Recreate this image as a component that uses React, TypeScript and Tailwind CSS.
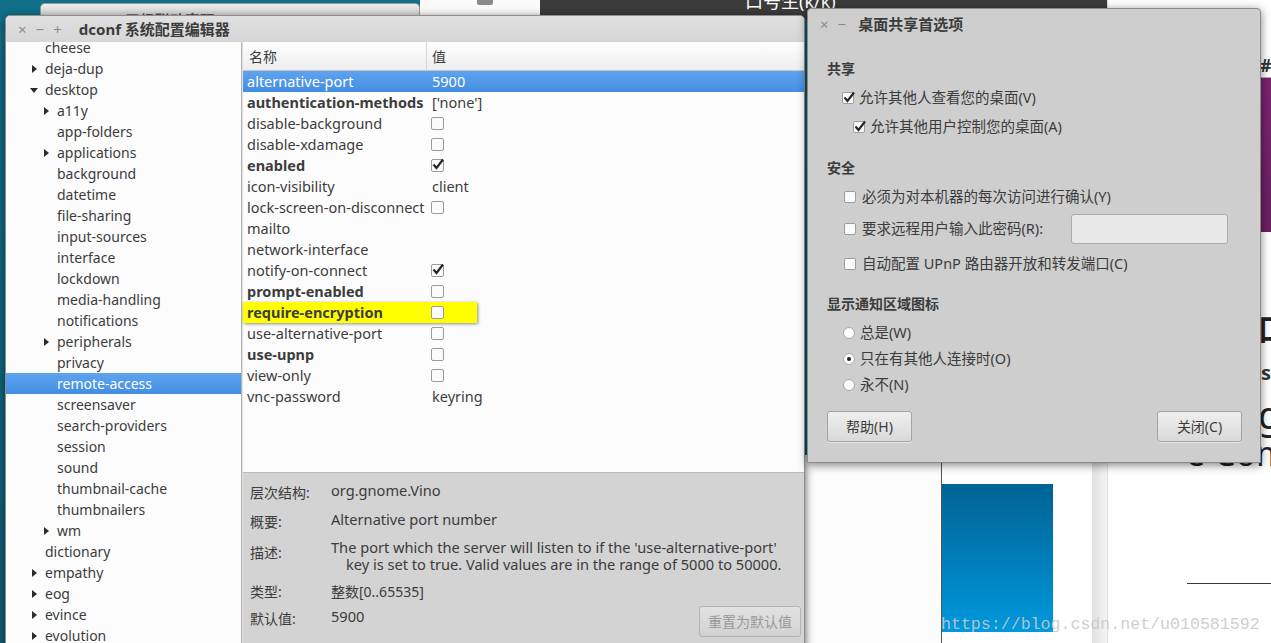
import React from 'react';

type TreeRow = { label: string; level: number; arrow?: 'right' | 'down'; selected?: boolean };

const tree: TreeRow[] = [
  { label: 'cheese', level: 0 },
  { label: 'deja-dup', level: 0, arrow: 'right' },
  { label: 'desktop', level: 0, arrow: 'down' },
  { label: 'a11y', level: 1, arrow: 'right' },
  { label: 'app-folders', level: 1 },
  { label: 'applications', level: 1, arrow: 'right' },
  { label: 'background', level: 1 },
  { label: 'datetime', level: 1 },
  { label: 'file-sharing', level: 1 },
  { label: 'input-sources', level: 1 },
  { label: 'interface', level: 1 },
  { label: 'lockdown', level: 1 },
  { label: 'media-handling', level: 1 },
  { label: 'notifications', level: 1 },
  { label: 'peripherals', level: 1, arrow: 'right' },
  { label: 'privacy', level: 1 },
  { label: 'remote-access', level: 1, selected: true },
  { label: 'screensaver', level: 1 },
  { label: 'search-providers', level: 1 },
  { label: 'session', level: 1 },
  { label: 'sound', level: 1 },
  { label: 'thumbnail-cache', level: 1 },
  { label: 'thumbnailers', level: 1 },
  { label: 'wm', level: 1, arrow: 'right' },
  { label: 'dictionary', level: 0 },
  { label: 'empathy', level: 0, arrow: 'right' },
  { label: 'eog', level: 0, arrow: 'right' },
  { label: 'evince', level: 0, arrow: 'right' },
  { label: 'evolution', level: 0, arrow: 'right' },
];

type KeyRow = { name: string; bold?: boolean; value?: string; check?: boolean; checked?: boolean; selected?: boolean; mark?: boolean };

const keys: KeyRow[] = [
  { name: 'alternative-port', value: '5900', selected: true },
  { name: 'authentication-methods', bold: true, value: "['none']" },
  { name: 'disable-background', check: true },
  { name: 'disable-xdamage', check: true },
  { name: 'enabled', bold: true, check: true, checked: true },
  { name: 'icon-visibility', value: 'client' },
  { name: 'lock-screen-on-disconnect', check: true },
  { name: 'mailto' },
  { name: 'network-interface' },
  { name: 'notify-on-connect', check: true, checked: true },
  { name: 'prompt-enabled', bold: true, check: true },
  { name: 'require-encryption', bold: true, check: true, mark: true },
  { name: 'use-alternative-port', check: true },
  { name: 'use-upnp', bold: true, check: true },
  { name: 'view-only', check: true },
  { name: 'vnc-password', value: 'keyring' },
];

const Arrow = ({ dir, light }: { dir: 'right' | 'down'; light?: boolean }) => (
  <svg width="10" height="10" viewBox="0 0 10 10" className="shrink-0">
    {dir === 'right' ? (
      <path d="M3 1 L8 5 L3 9 Z" fill={light ? '#fff' : '#2b2b2b'} />
    ) : (
      <path d="M1 3 L9 3 L5 8 Z" fill={light ? '#fff' : '#2b2b2b'} />
    )}
  </svg>
);

const CheckBox = ({ checked, size = 13 }: { checked?: boolean; size?: number }) => (
  <span
    className="relative inline-block shrink-0 rounded-[2px] border border-[#9c9c9c] bg-[#fbfbfb]"
    style={{ width: size, height: size }}
  >
    {checked && (
      <svg width="14" height="14" viewBox="0 0 14 14" className="absolute left-[-1px] top-[-3px]">
        <path d="M2.5 7.5 L5.5 11 L12 2.5" fill="none" stroke="#262626" strokeWidth="2.2" />
      </svg>
    )}
  </span>
);

const Radio = ({ on }: { on?: boolean }) => (
  <span className="flex h-[12px] w-[12px] shrink-0 items-center justify-center rounded-full border border-[#a8a8a8] bg-[#fbfbfb]">
    {on && <span className="h-[4px] w-[4px] rounded-full bg-[#222]" />}
  </span>
);

const TitleButtons = ({ plus }: { plus?: boolean }) => (
  <div className="flex items-center gap-[9px] text-[15px] leading-none text-[#8c8c8c]">
    <span>×</span>
    <span>−</span>
    {plus && <span>+</span>}
  </div>
);

function DconfWindow() {
  return (
    <div className="absolute left-[5px] top-[15px] flex h-[640px] w-[800px] flex-col overflow-hidden rounded-t-[5px] border border-[#8e8e8e] bg-[#d5d5d5] shadow-[0_2px_10px_rgba(0,0,0,0.55)]">
      <div className="flex h-[26px] shrink-0 items-center bg-gradient-to-b from-[#e0e0e0] to-[#d6d6d6] pl-[12px] text-[#3c3c3c]">
        <TitleButtons plus />
        <span className="ml-[17px] text-[15px] font-bold text-[#3c3c3c]">dconf 系统配置编辑器</span>
      </div>
      <div className="flex min-h-0 flex-1">
        <div className="w-[235px] shrink-0 overflow-hidden bg-[#fcfcfc]">
          <div className="mt-[-5px]">
            {tree.map((r) => (
              <div
                key={r.label}
                className={`flex h-[21px] items-center text-[14px] ${
                  r.selected ? 'bg-gradient-to-b from-[#5ea3f0] to-[#438de2] text-white' : 'text-[#3c3c3c]'
                }`}
                style={{ paddingLeft: 23 + r.level * 12 }}
              >
                <span className="flex w-[16px] justify-start">{r.arrow && <Arrow dir={r.arrow} light={r.selected} />}</span>
                <span>{r.label}</span>
              </div>
            ))}
          </div>
        </div>
        <div className="w-[2px] shrink-0 border-l border-[#b5b5b5] bg-[#dedede]" />
        <div className="flex min-w-0 flex-1 flex-col">
          <div className="h-[431px] shrink-0 border-b border-[#b8b8b8] bg-[#fcfcfc]">
            <div className="flex h-[29px] border-b border-[#c6c6c6] bg-gradient-to-b from-[#ffffff] to-[#ededed] text-[14px] text-[#3c3c3c]">
              <div className="flex w-[184px] items-center border-r border-[#d4d4d4] pl-[6px]">名称</div>
              <div className="flex items-center pl-[5px]">值</div>
            </div>
            {keys.map((k) => (
              <div
                key={k.name}
                className={`relative flex h-[21px] items-center text-[14.5px] ${
                  k.selected ? 'bg-gradient-to-b from-[#5ea3f0] to-[#438de2] text-white' : 'text-[#3c3c3c]'
                }`}
              >
                {k.mark && (
                  <div className="absolute left-0 top-0 h-[21px] w-[234px] bg-[#ffff00] shadow-[1px_1px_3px_rgba(0,0,0,0.45)]" />
                )}
                <div className={`relative w-[184px] whitespace-nowrap pl-[4px] ${k.bold ? 'font-bold' : ''}`}>{k.name}</div>
                <div className="relative flex items-center pl-[4px]">
                  {k.check ? <CheckBox checked={k.checked} /> : <span className="pl-[1px]">{k.value}</span>}
                </div>
              </div>
            ))}
          </div>
          <div className="flex-1 bg-[#d3d3d3] pl-[7px] pr-[3px] pt-[3px] text-[14px] text-[#3c3c3c]">
            <div className="flex h-[29px] items-center">
              <span className="mt-[3px] w-[81px]">层次结构:</span>
              <span className="text-[14.6px]">org.gnome.Vino</span>
            </div>
            <div className="flex h-[29px] items-center">
              <span className="mt-[3px] w-[81px]">概要:</span>
              <span className="text-[14.6px]">Alternative port number</span>
            </div>
            <div className="flex h-[43px] pt-[5px]">
              <span className="mt-[3px] w-[81px]">描述:</span>
              <div className="text-[14.6px] leading-[17px]">
                <div className="whitespace-nowrap">The port which the server will listen to if the 'use-alternative-port'</div>
                <div className="whitespace-nowrap pl-[15px]">key is set to true. Valid values are in the range of 5000 to 50000.</div>
              </div>
            </div>
            <div className="flex h-[29px] items-center">
              <span className="w-[81px]">类型:</span>
              <span>整数[0..65535]</span>
            </div>
            <div className="flex h-[32px] items-start">
              <span className="mt-[3px] w-[81px] leading-[20px]">默认值:</span>
              <span className="flex-1 text-[14.6px] leading-[20px]">5900</span>
              <button className="h-[31px] w-[102px] rounded-[3px] border border-[#b4b4b4] bg-gradient-to-b from-[#e2e2e2] to-[#d2d2d2] text-[14px] text-[#9a9a9a]">
                重置为默认值
              </button>
            </div>
          </div>
        </div>
      </div>
    </div>
  );
}

const DlgButton = ({ children }: { children: React.ReactNode }) => (
  <button className="h-[31px] w-[85px] rounded-[3px] border border-[#a4a4a4] bg-gradient-to-b from-[#efefef] to-[#d9d9d9] text-[14px] text-[#3c3c3c] shadow-[0_1px_0_rgba(255,255,255,0.5)]">
    {children}
  </button>
);

function ShareDialog() {
  return (
    <div className="absolute left-[807px] top-[8px] flex h-[455px] w-[454px] flex-col rounded-t-[4px] border border-[#8a8a8a] bg-[#cecece] text-[#3c3c3c] shadow-[0_2px_10px_rgba(0,0,0,0.5)]">
      <div className="flex h-[30px] shrink-0 items-center pl-[12px]">
        <TitleButtons />
        <span className="ml-[12px] text-[15px] font-bold">桌面共享首选项</span>
      </div>
      <div className="flex flex-col pl-[19px] pr-[18px] text-[14.5px]">
        <div className="mt-[18px] flex h-[22px] items-center text-[14px] font-bold">共享</div>
        <div className="mt-[4px] flex h-[29px] items-center gap-[5px] pl-[15px]">
          <CheckBox checked size={12} />
          <span>允许其他人查看您的桌面(V)</span>
        </div>
        <div className="flex h-[29px] items-center gap-[5px] pl-[26px]">
          <CheckBox checked size={12} />
          <span>允许其他用户控制您的桌面(A)</span>
        </div>
        <div className="mt-[15px] flex h-[22px] items-center text-[14px] font-bold">安全</div>
        <div className="mt-[4px] flex h-[29px] items-center gap-[6px] pl-[17px]">
          <CheckBox size={12} />
          <span>必须为对本机器的每次访问进行确认(Y)</span>
        </div>
        <div className="mt-[1px] flex h-[34px] items-center gap-[6px] pl-[17px] pr-[14px]">
          <CheckBox size={12} />
          <span className="flex-1">要求远程用户输入此密码(R):</span>
          <div className="h-[30px] w-[157px] rounded-[3px] border border-[#ababab] bg-[#e8e8e8]" />
        </div>
        <div className="mt-[3px] flex h-[29px] items-center gap-[6px] pl-[17px]">
          <CheckBox size={12} />
          <span>自动配置 UPnP 路由器开放和转发端口(C)</span>
        </div>
        <div className="mt-[14px] flex h-[22px] items-center text-[14px] font-bold">显示通知区域图标</div>
        <div className="mt-[6px] flex h-[26px] items-center gap-[5px] pl-[16px]">
          <Radio />
          <span>总是(W)</span>
        </div>
        <div className="flex h-[26px] items-center gap-[5px] pl-[16px]">
          <Radio on />
          <span>只在有其他人连接时(O)</span>
        </div>
        <div className="flex h-[26px] items-center gap-[5px] pl-[16px]">
          <Radio />
          <span>永不(N)</span>
        </div>
        <div className="mt-[13px] flex justify-between">
          <DlgButton>帮助(H)</DlgButton>
          <DlgButton>关闭(C)</DlgButton>
        </div>
      </div>
    </div>
  );
}

export default function App() {
  return (
    <div className="relative h-[643px] w-[1271px] overflow-hidden bg-gradient-to-b from-[#10708a] to-[#0c5f77] font-['Noto_Sans','Noto_Sans_CJK_SC',sans-serif]">
      {/* things behind the two windows */}
      <div className="absolute left-[40px] top-[3px] h-[12px] w-[380px] overflow-hidden rounded-t-[5px] border border-b-0 border-[#9a9a9a] bg-gradient-to-b from-[#ececec] to-[#d8d8d8]">
        <span className="absolute left-[84px] top-[7px] text-[15px] font-bold leading-[18px] text-[#555] blur-[0.6px]">三级联动实现 - dconf</span>
      </div>
      <div className="absolute left-[420px] top-0 h-[20px] w-[120px] bg-[#fafafa]">
        <div className="absolute left-[57px] top-0 h-[5px] w-[16px] rounded-b-[2px] bg-[#8a8a8a]" />
      </div>
      <div className="absolute left-[540px] top-0 h-[20px] w-[567px] overflow-hidden bg-[#3b3b3b]">
        <span className="absolute left-[205px] top-[-12px] whitespace-nowrap text-[18px] text-white">口号生(k/k)</span>
      </div>
      <div className="absolute left-[1107px] top-0 h-[643px] w-[164px] overflow-hidden border-l border-[#dedede] bg-white">
        <span className="absolute left-[152px] top-[52px] text-[18px] font-bold text-[#333]">#</span>
        <div className="absolute left-[152px] top-[77px] h-[155px] w-[20px] border-t border-[#c7a0bf] bg-gradient-to-b from-[#7c2470] to-[#6a1f5e]" />
        <span className="absolute left-[150px] top-[314px] text-[30px] font-bold leading-none text-[#222]">口</span>
        <span className="absolute left-[153px] top-[358px] text-[20px] font-bold text-[#333]">s</span>
        <span className="absolute left-[150px] top-[395px] text-[38px] leading-none text-[#222]">g</span>
        <span className="absolute left-[78px] top-[436px] whitespace-nowrap text-[34px] leading-none text-[#222]">e Comm</span>
        <div className="absolute left-[79px] top-[583px] h-[1px] w-[100px] bg-[#3a3a3a]" />
      </div>
      <div className="absolute left-[800px] top-[455px] h-[200px] w-[141px] bg-[#fcfcfc] shadow-[inset_8px_0_8px_-6px_rgba(0,0,0,0.35)]" />
      <div className="absolute left-[941px] top-[455px] h-[200px] w-[151px] border-l border-[#555] bg-white">
        <div className="absolute left-0 top-[29px] h-[148px] w-[111px] bg-gradient-to-b from-[#006294] to-[#0099de]" />
      </div>
      <div className="absolute left-[1092px] top-[455px] h-[200px] w-[15px] bg-gradient-to-r from-[#e0e0e0] to-[#f4f4f4]" />
      <span className="absolute left-[941px] top-[613px] font-['Liberation_Mono',monospace] text-[16.6px] text-[#c9c9c9]/90">
        https://blog.csdn.net/u010581592
      </span>

      <DconfWindow />
      <ShareDialog />
    </div>
  );
}
